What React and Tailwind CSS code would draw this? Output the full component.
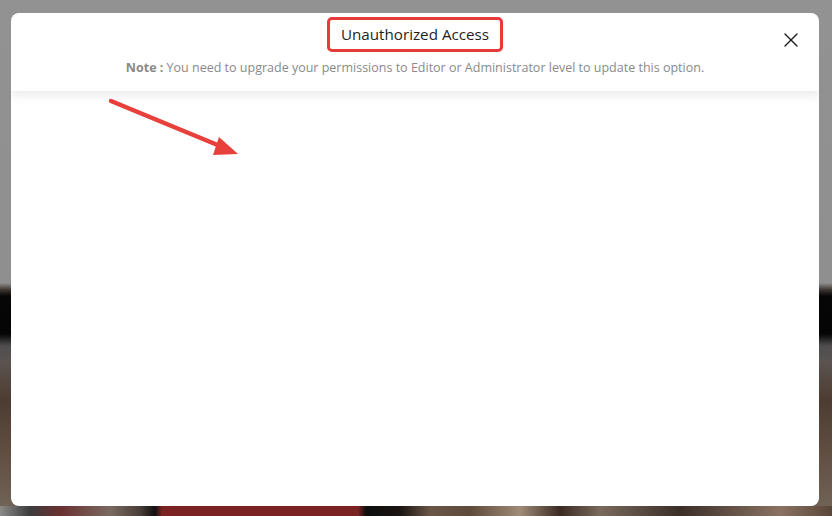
import React from 'react';
import { X } from 'lucide-react';

// Dimmed, blurred page behind the dialog
const Backdrop = () => (
  <div className="absolute inset-0 bg-[linear-gradient(180deg,#929292_0px,#8f8f8f_283px,#3a3430_290px,#060606_296px,#050505_334px,#4f4e50_346px,#5a5350_362px,#4d3c32_400px,#5f4d40_450px,#74665a_516px)]">
    <div className="absolute left-0 right-0 bottom-0 h-[10px] bg-[linear-gradient(90deg,#8a8a88_0px,#3c3c3e_30px,#6a3030_60px,#7a6a60_110px,#4a3e38_140px,#111_155px,#7b2323_162px,#7b2323_358px,#0e0e0e_366px,#1a1412_400px,#6a5646_430px,#5e4a3a_470px,#a08b78_520px,#3a2a22_560px,#7a6a5c_600px,#3a2e28_680px,#8a7262_780px,#5a4638_832px)]" />
  </div>
);

// Red callout arrow pointing into the empty dialog body
const CalloutArrow = () => (
  <svg className="absolute left-0 top-0 pointer-events-none" width="832" height="516" viewBox="0 0 832 516">
    <line x1="111" y1="101" x2="220" y2="146" stroke="#e8403a" strokeWidth="4.5" strokeLinecap="round" />
    <polygon points="238,154 213,155 219,137" fill="#e8403a" />
  </svg>
);

export default function App() {
  return (
    <div className="relative w-[832px] h-[516px] overflow-hidden font-['Open_Sans',sans-serif]">
      <Backdrop />

      <div className="absolute left-[11px] top-[13px] w-[808px] h-[493px] bg-white rounded-[8px] flex flex-col overflow-hidden">
        <div className="relative h-[78px] shrink-0 flex flex-col items-center pt-[4px] shadow-[0_5px_9px_rgba(0,0,0,0.08)] z-10">
          <div className="h-[35px] px-[11px] flex items-center border-[3px] border-[#e53b3b] rounded-[5px]">
            <h2 className="text-[15.2px] leading-none text-[#1f1f1f]">Unauthorized Access</h2>
          </div>
          <p className="mt-[6px] text-[12.5px] leading-[20px] text-[#8a8a8a]">
            <span className="font-bold">Note :</span> You need to upgrade your permissions to Editor or Administrator level to update this option.
          </p>
          <button className="absolute right-[16px] top-[15px] w-[24px] h-[24px] flex items-center justify-center text-[#1a1a1a]">
            <X size={24} strokeWidth={1.4} />
          </button>
        </div>
        <div className="flex-1" />
      </div>

      <CalloutArrow />
    </div>
  );
}
